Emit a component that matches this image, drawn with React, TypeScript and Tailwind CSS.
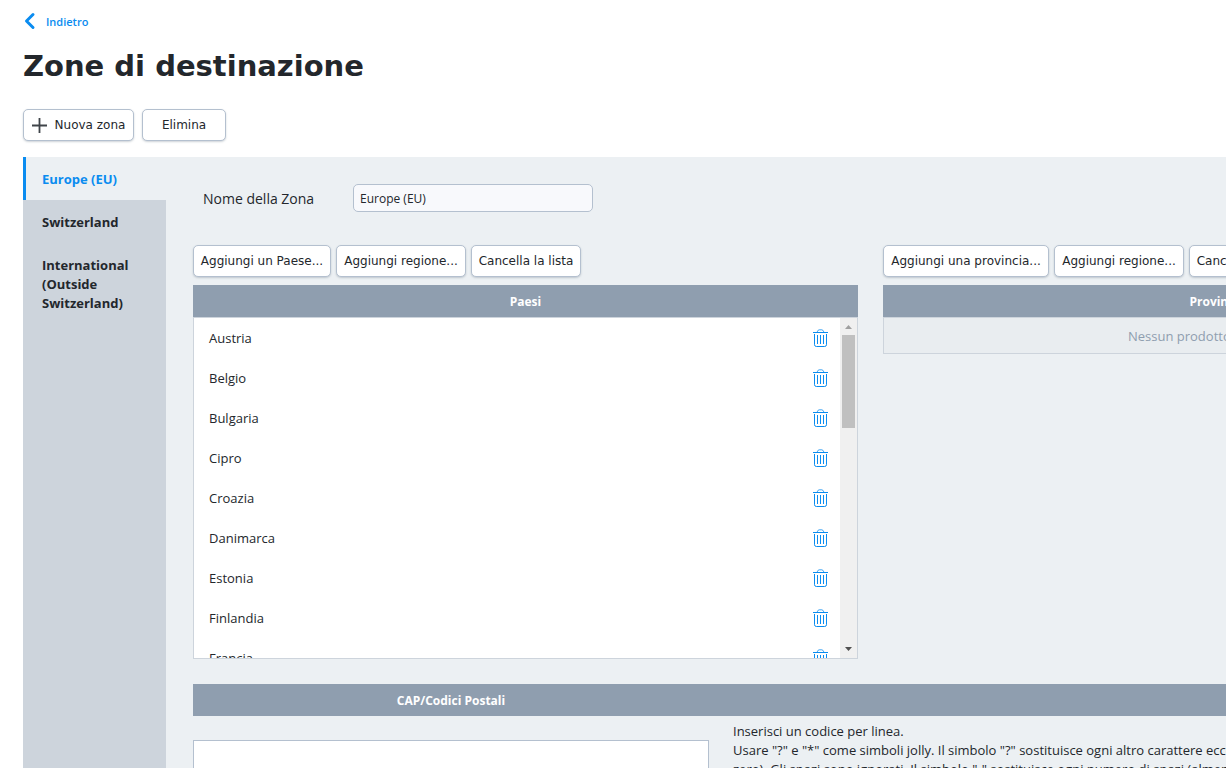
import type { ReactNode } from "react";

const countries = ["Austria", "Belgio", "Bulgaria", "Cipro", "Croazia", "Danimarca", "Estonia", "Finlandia", "Francia"];

function Button({ children, wide = "px-[7px]" }: { children: ReactNode; wide?: string }) {
  return (
    <button
      type="button"
      className={`flex h-8 shrink-0 items-center justify-center whitespace-nowrap rounded-[5px] border border-[#b4c0cf] bg-white font-['DejaVu_Sans',sans-serif] text-[12px] text-[#23272c] shadow-[0_1px_2px_rgba(60,80,100,0.25)] ${wide}`}
    >
      {children}
    </button>
  );
}

function Trash() {
  return (
    <svg width="16" height="18" viewBox="0 0 16 18" fill="none" stroke="#0a8cf0" aria-hidden="true">
      <path d="M0 3.5H15" />
      <path d="M4.2 3Q4.6 1 6.2 0.8H8.8Q10.4 1 10.8 3" strokeOpacity="0.75" />
      <path d="M1.5 5V15.7Q1.6 17.4 3.3 17.5H11.7Q13.4 17.4 13.5 15.7V5" />
      <path d="M4.5 6V15M7.5 6V15M10.5 6V15" />
    </svg>
  );
}

export default function App() {
  return (
    <div className="flex h-screen flex-col overflow-hidden bg-white pl-[23px] font-['Open_Sans',sans-serif] text-[13px] leading-[19px] text-[#23272c]">
      <header className="shrink-0">
        <a href="#back" className="flex h-[42px] items-center gap-2.5 text-[11px] font-semibold text-[#0a8cf0]">
          <svg width="13" height="18" viewBox="0 0 13 18" fill="none" stroke="#0a8cf0" strokeWidth="3" strokeLinecap="round" strokeLinejoin="round" aria-hidden="true">
            <path d="M10 2.5L3.5 9L10 15.5" />
          </svg>
          Indietro
        </a>
        <h1 className="flex h-12 items-center whitespace-nowrap font-['DejaVu_Sans',sans-serif] text-[29px] font-bold">Zone di destinazione</h1>
        <div className="flex gap-2 pb-4 pt-[19px]">
          <Button wide="w-[111px] gap-2">
            <svg width="15" height="15" viewBox="0 0 15 15" stroke="#3f4449" strokeWidth="1.8" aria-hidden="true">
              <path d="M7.5 0V15M0 7.5H15" />
            </svg>
            Nuova zona
          </Button>
          <Button wide="w-[84px]">Elimina</Button>
        </div>
      </header>

      <main className="flex min-h-0 flex-1 bg-[#ecf0f3]">
        <nav className="flex w-[143px] shrink-0 flex-col bg-[#cdd4dc] font-bold">
          <a href="#europe" className="border-l-[3px] border-[#0a8cf0] bg-[#ecf0f3] px-4 pb-[11px] pt-[13px] text-[#0a8cf0]">Europe (EU)</a>
          <a href="#switzerland" className="pb-[11px] pl-[19px] pr-4 pt-[13px]">Switzerland</a>
          <a href="#international" className="pb-[11px] pl-[19px] pr-4 pt-[13px]">International (Outside Switzerland)</a>
        </nav>

        <div className="min-w-0 flex-1 overflow-hidden pl-[27px] pt-[27px]">
          <div className="w-[1355px]">
            <div className="flex items-center pl-2.5">
              <label htmlFor="zone" className="w-[150px] whitespace-nowrap text-[14px]">Nome della Zona</label>
              <input id="zone" defaultValue="Europe (EU)" className="h-7 w-60 rounded-[5px] border border-[#b4c0cf] bg-[#f8f9fc] px-1.5 text-[12px]" />
            </div>

            <div className="mt-[33px] flex items-start gap-[25px]">
              <section className="min-w-0 flex-1">
                <div className="mb-2 flex gap-[5px]">
                  <Button wide="w-[138px]">Aggiungi un Paese...</Button>
                  <Button wide="w-[130px]">Aggiungi regione...</Button>
                  <Button wide="w-[110px]">Cancella la lista</Button>
                </div>
                <h2 className="flex h-8 items-center justify-center bg-[#8f9eaf] text-[12px] font-bold text-white">Paesi</h2>
                <div className="flex h-[342px] overflow-hidden border border-[#cdd4dc] bg-white">
                  <ul className="flex-1">
                    {countries.map((name) => (
                      <li key={name} className="flex h-10 items-center justify-between pl-[15px] pr-[11px]">
                        {name}
                        <button type="button" aria-label={`Elimina ${name}`}><Trash /></button>
                      </li>
                    ))}
                  </ul>
                  <div className="flex w-[17px] flex-col items-center justify-between bg-[#f0f0f0]">
                    <div className="flex flex-col items-center">
                      <svg width="17" height="17" viewBox="0 0 17 17" fill="#a0a0a0" aria-hidden="true"><path d="M5 11L8.5 7L12 11Z" /></svg>
                      <div className="h-[93px] w-[13px] bg-[#c0c0c0]" />
                    </div>
                    <svg width="17" height="17" viewBox="0 0 17 17" fill="#505050" aria-hidden="true"><path d="M5 6L8.5 10L12 6Z" /></svg>
                  </div>
                </div>
              </section>

              <section className="min-w-0 flex-1">
                <div className="mb-2 flex gap-[5px]">
                  <Button wide="w-[166px]">Aggiungi una provincia...</Button>
                  <Button wide="w-[130px]">Aggiungi regione...</Button>
                  <Button wide="w-[110px]">Cancella la lista</Button>
                </div>
                <h2 className="flex h-8 items-center justify-center bg-[#8f9eaf] text-[12px] font-bold text-white">Province</h2>
                <p className="flex h-[37px] items-center justify-center border border-[#cdd4dc] bg-[#e9edf0] pt-0.5 text-[#8f9eaf]">Nessun prodotto selezionato</p>
              </section>
            </div>

            <section className="mt-[25px]">
              <div className="flex h-8 bg-[#8f9eaf]">
                <h2 className="flex w-[516px] items-center justify-center text-[12px] font-bold text-white">CAP/Codici Postali</h2>
              </div>
              <div className="flex items-start gap-6 pt-[6px]">
                <textarea aria-label="CAP/Codici Postali" className="mt-[18px] h-40 w-[516px] resize-none border border-[#b4c0cf] bg-white p-1.5" />
                <p className="whitespace-nowrap">
                  Inserisci un codice per linea.<br />
                  Usare "?" e "*" come simboli jolly. Il simbolo "?" sostituisce ogni altro carattere eccetto lo<br />
                  zero). Gli spazi sono ignorati. Il simbolo "-" sostituisce ogni numero di spazi (almeno uno).
                </p>
              </div>
            </section>
          </div>
        </div>
      </main>
    </div>
  );
}
